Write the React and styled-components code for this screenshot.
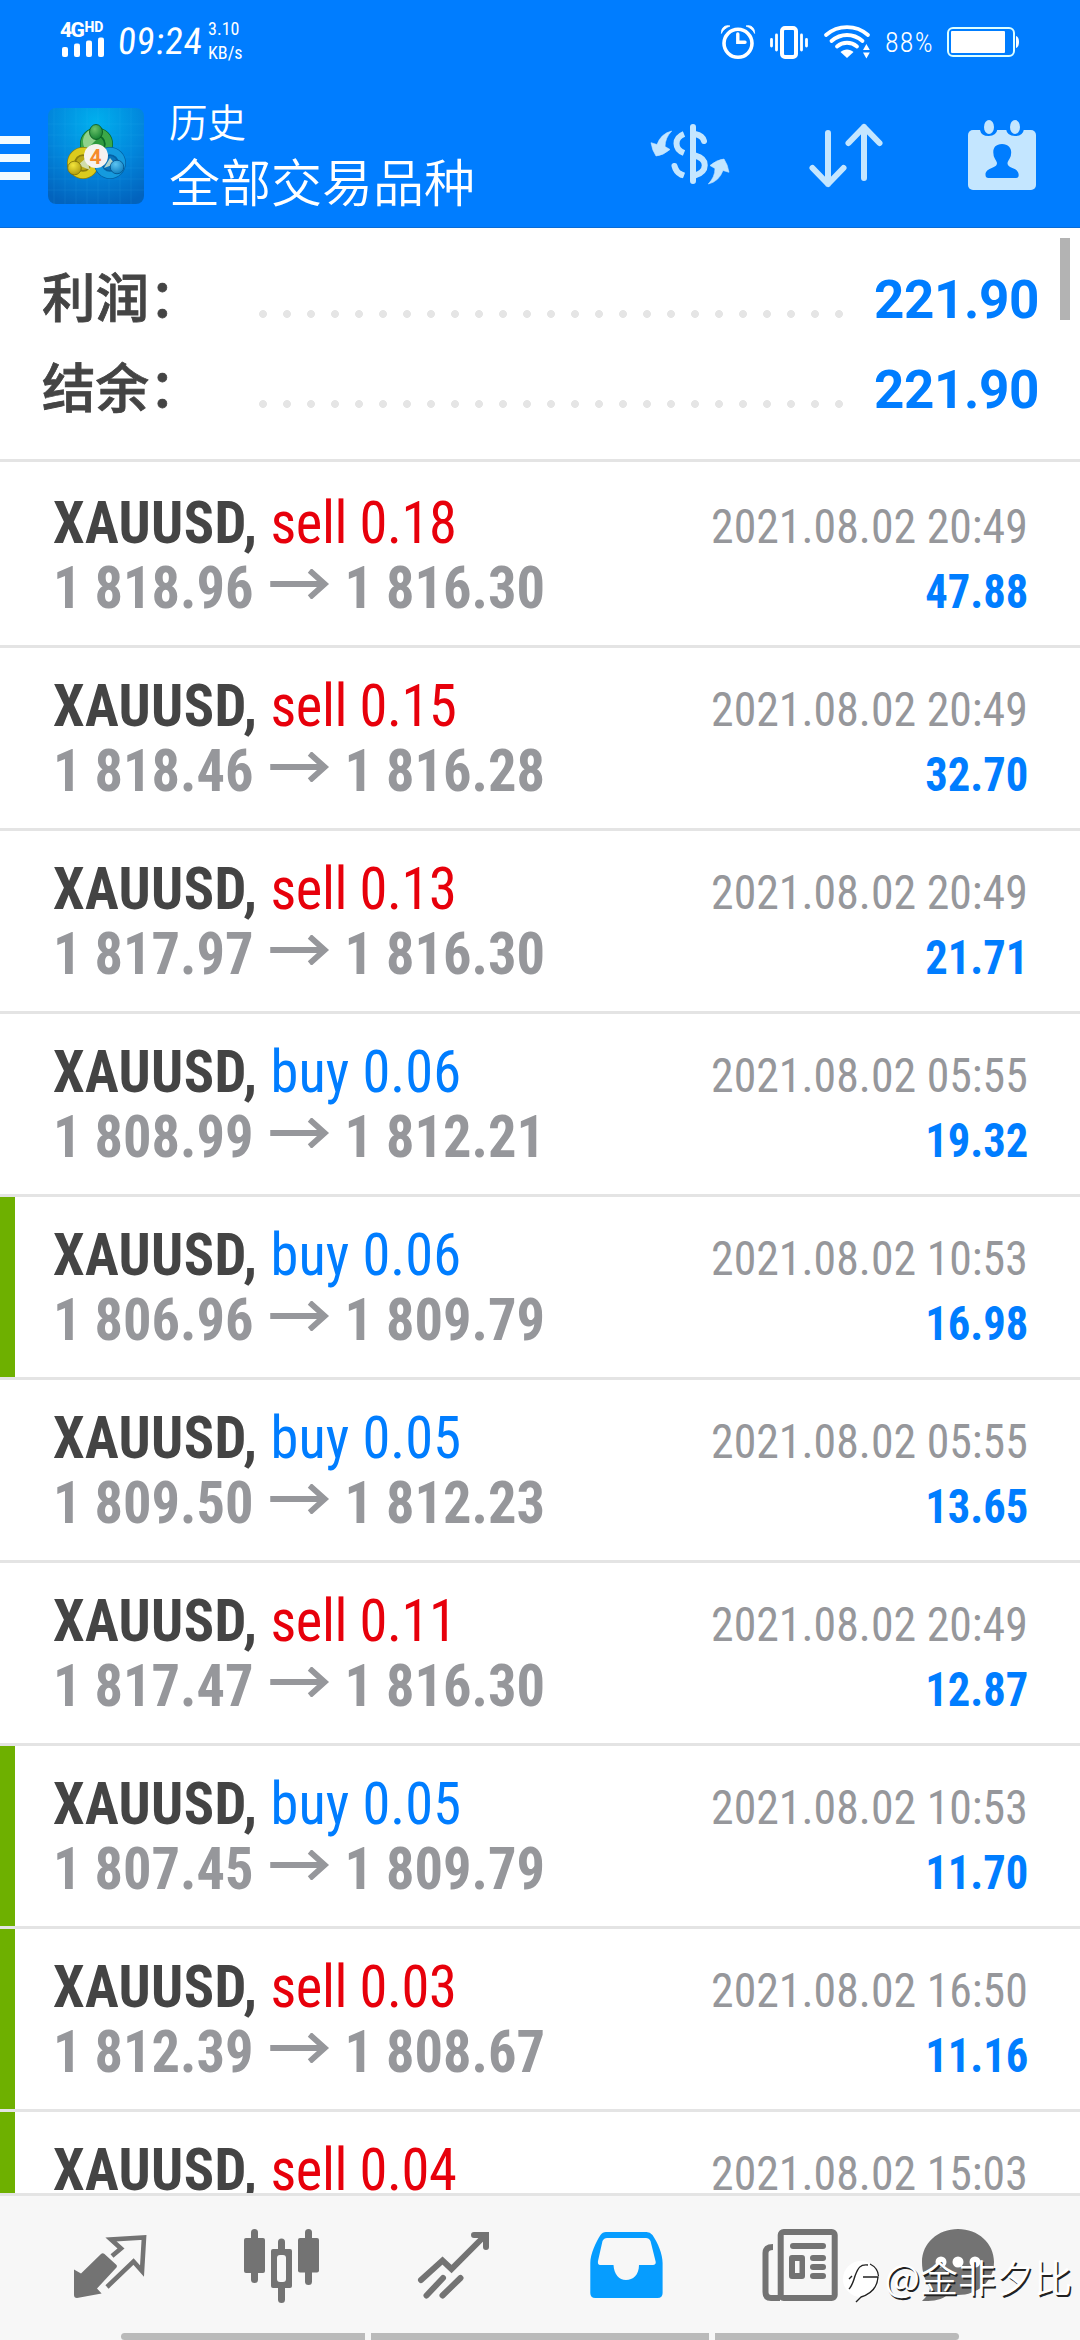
import React from 'react'
import styled, { createGlobalStyle } from 'styled-components'

const deals = [
  { type: 'sell', lot: '0.18', open: '1 818.96', close: '1 816.30', time: '2021.08.02 20:49', profit: '47.88' },
  { type: 'sell', lot: '0.15', open: '1 818.46', close: '1 816.28', time: '2021.08.02 20:49', profit: '32.70' },
  { type: 'sell', lot: '0.13', open: '1 817.97', close: '1 816.30', time: '2021.08.02 20:49', profit: '21.71' },
  { type: 'buy', lot: '0.06', open: '1 808.99', close: '1 812.21', time: '2021.08.02 05:55', profit: '19.32' },
  { type: 'buy', lot: '0.06', open: '1 806.96', close: '1 809.79', time: '2021.08.02 10:53', profit: '16.98', marked: true },
  { type: 'buy', lot: '0.05', open: '1 809.50', close: '1 812.23', time: '2021.08.02 05:55', profit: '13.65' },
  { type: 'sell', lot: '0.11', open: '1 817.47', close: '1 816.30', time: '2021.08.02 20:49', profit: '12.87' },
  { type: 'buy', lot: '0.05', open: '1 807.45', close: '1 809.79', time: '2021.08.02 10:53', profit: '11.70', marked: true },
  { type: 'sell', lot: '0.03', open: '1 812.39', close: '1 808.67', time: '2021.08.02 16:50', profit: '11.16', marked: true },
  { type: 'sell', lot: '0.04', time: '2021.08.02 15:03', marked: true },
]

const totals = [
  { label: '利润：', value: '221.90' },
  { label: '结余：', value: '221.90' },
]

const StatusBar = () => (
  <Status>
    <Signal>
      <Network>4G<sup>HD</sup></Network>
      <svg width='44' height='20' viewBox='61 37 44 20' fill='#fff'>
        <rect x='62' y='47' width='6' height='10' rx='2' />
        <rect x='74' y='43.5' width='6' height='13.5' rx='2' />
        <rect x='86' y='40.5' width='6' height='16.5' rx='2' />
        <rect x='98' y='37.5' width='6' height='19.5' rx='2' />
      </svg>
    </Signal>
    <Clock>09:24</Clock>
    <Speed>
      <span>3.10</span>
      <span>KB/s</span>
    </Speed>
    <StatusIcons>
      <svg width='154' height='84' viewBox='720 0 154 84' fill='none' stroke='#fff' strokeLinecap='round'>
        <circle cx='738' cy='43.3' r='14' strokeWidth='3.6' />
        <path d='M737.8 34V42.3H745' strokeWidth='3.4' />
        <path d='M721.5 33C721 28 725 24.5 730 26C726 27.5 723 30 721.5 33Z M754.5 33C755 28 751 24.5 746 26C750 27.5 753 30 754.5 33Z' fill='#fff' strokeWidth='.8' />
        <rect x='782' y='28' width='14' height='29' rx='3' strokeWidth='4' />
        <path d='M776.5 35V50M771.5 39.5V46M801.5 35V50M806.5 39.5V46' strokeWidth='2.8' />
        <path d='M826 35C838 24.5 856 24.5 868 35M831.5 41C841 33 853 33 862.5 41M837 46.5C843 41.5 851 41.5 857 46.5' strokeWidth='3.8' />
        <path d='M840.5 52C844 48.5 850 48.5 853.5 52L847 58Z' fill='#fff' stroke='none' />
        <path d='M863 50L866.4 44L869.8 50ZM863 52.5L866.4 58.5L869.8 52.5Z' fill='#fff' stroke='none' />
      </svg>
      <Percent>88%</Percent>
      <svg width='76' height='34' viewBox='945 25 76 34'>
        <rect x='948' y='28' width='66' height='28' rx='5' fill='none' stroke='#dff' strokeWidth='2' />
        <rect x='951' y='31' width='54' height='22' rx='1' fill='#fff' />
        <path d='M1016 36Q1019 37 1019 42T1016 48Z' fill='#fff' />
      </svg>
    </StatusIcons>
  </Status>
)

const Logo = () => (
  <svg width='96' height='96' viewBox='0 0 96 96'>
    <defs>
      <radialGradient id='tile' cx='.5' cy='.15' r='.9'>
        <stop offset='0' stopColor='#00b0ee' />
        <stop offset='.55' stopColor='#0286dc' />
        <stop offset='1' stopColor='#0263bd' />
      </radialGradient>
      <radialGradient id='green' cx='.4' cy='.3' r='.8'>
        <stop offset='0' stopColor='#6cc36a' />
        <stop offset='1' stopColor='#0b7a2c' />
      </radialGradient>
      <radialGradient id='yellow' cx='.4' cy='.3' r='.8'>
        <stop offset='0' stopColor='#f3e53c' />
        <stop offset='1' stopColor='#a89408' />
      </radialGradient>
      <radialGradient id='blue' cx='.4' cy='.3' r='.8'>
        <stop offset='0' stopColor='#5cc4f2' />
        <stop offset='1' stopColor='#0676ba' />
      </radialGradient>
    </defs>
    <rect width='96' height='96' rx='8' fill='url(#tile)' />
    <path d='M6 0V96M17 0V96M28 0V96M39 0V96M50 0V96M61 0V96M72 0V96M83 0V96M0 16H96M0 27H96M0 38H96M0 49H96M0 60H96M0 71H96M0 82H96' stroke='#4cc8ff' strokeWidth='.8' opacity='.13' />
    <circle cx='48.5' cy='36' r='12' fill='#2f9a3e' stroke='#0b6b2a' strokeWidth='9' />
    <circle cx='48.5' cy='36' r='12.5' fill='none' stroke='#3ba848' strokeWidth='6.5' />
    <path d='M42 22C34 26 33 36 38 42L48 32Z' fill='#8fd28c' />
    <circle cx='35' cy='55' r='11.5' fill='#b9a915' stroke='#8d7f0b' strokeWidth='9' />
    <circle cx='35' cy='55' r='12' fill='none' stroke='#dccb1d' strokeWidth='6.5' />
    <circle cx='62' cy='55' r='11.5' fill='#0a75bc' stroke='#0562a5' strokeWidth='9' />
    <circle cx='62' cy='55' r='12' fill='none' stroke='#159ade' strokeWidth='6.5' />
    <path d='M30 57L38 50L42 62ZM56 60L62 50L67 56Z' fill='#d7ead0' opacity='.8' />
    <ellipse cx='48' cy='24' rx='6.5' ry='7.5' fill='url(#green)' stroke='#07551e' strokeWidth='.8' />
    <circle cx='26.5' cy='60' r='6.8' fill='url(#yellow)' stroke='#7a6d07' strokeWidth='.8' />
    <circle cx='69' cy='59' r='6.8' fill='url(#blue)' stroke='#04508a' strokeWidth='.8' />
    <circle cx='48' cy='48' r='12' fill='#f6f3f0' />
    <text x='47.5' y='55.5' textAnchor='middle' fontFamily='Roboto' fontWeight='700' fontSize='21' fill='#f58a2c'>4</text>
  </svg>
)

const swapArrow = 'M671.7 131Q661 133.5 657 144.5L651 142.7Q652 150 656 156Q663 155.5 670 149.5L665 146.5Q665 138 671.7 131Z'

const Toolbar = () => (
  <Bar>
    <Burger><span /><span /><span /></Burger>
    <Logo />
    <Title>
      <small>历史</small>
      <span>全部交易品种</span>
    </Title>
    <Action viewBox='612 84 156 144'>
      <path d={swapArrow} fill='#c4e6ff' strokeWidth='.6' />
      <path d={swapArrow} fill='#c4e6ff' strokeWidth='.6' transform='rotate(180 690 157.5)' />
      <path d='M693 127V181M704 141C703 137 700 135 695 134M674.5 166C675.5 170 678 173 681 174.5' strokeLinecap='round' />
      <path d='M684 134C674 138 674 149 684 153M680 174L684 175.5M695 155.5C708 159 708 171 695 175.5' />
    </Action>
    <Action viewBox='768 84 156 144'>
      <path d='M828 133V184M812.5 168L828 184L843.5 168M864 178V127M848.5 143L864 127L879.5 143' strokeLinecap='round' strokeLinejoin='round' />
    </Action>
    <Action viewBox='924 84 156 144'>
      <rect x='968' y='130' width='68' height='60' rx='5' fill='#c4e6ff' stroke='none' />
      <path d='M980 129V130Q981 136 988.7 136T997.5 129ZM1006 129Q1007 136 1015 136T1024 129Z' fill='#007dff' stroke='none' />
      <ellipse cx='989' cy='127' rx='5' ry='7' fill='#c4e6ff' stroke='none' />
      <ellipse cx='1015' cy='127' rx='5' ry='7' fill='#c4e6ff' stroke='none' />
      <path d='M1002 144C1009 144 1012 149 1011 154C1011 158 1008 160 1007.5 163C1007 169 1018.7 167 1018.7 175Q1018.7 178 1016 178H988.5Q985.5 178 985.5 175C985.5 167 997 169 997 163C996.5 160 993.5 158 993.5 154C992.5 149 995 144 1002 144Z' fill='#007dff' stroke='none' />
    </Action>
  </Bar>
)

const Deal = ({ deal }) => (
  <Row $marked={deal.marked}>
    <Line>
      <Left><b>XAUUSD,</b> <Side $type={deal.type}>{deal.type} {deal.lot}</Side></Left>
      <Time>{deal.time}</Time>
    </Line>
    {deal.open && (
      <Line>
        <Prices>
          {deal.open}
          <Arrow viewBox='0 0 63 30'>
            <path d='M0 15H58M42 1.5L58 15L42 28.5' fill='none' stroke='currentColor' strokeWidth='6' />
          </Arrow>
          {deal.close}
        </Prices>
        <Profit>{deal.profit}</Profit>
      </Line>
    )}
  </Row>
)

const TabBar = () => (
  <Tabs>
    <Tab viewBox='24 2196 172 137'>
      <path d='M74 2269.5L81 2273.5L101 2254Q102.6 2252.5 104.5 2254L116.5 2265Q117.5 2266.5 116 2268L97 2288.5L101.6 2293.5L77 2298Q74 2298 74 2295Z' />
      <path d='M112 2256L121 2248.5L111 2239.5L144 2237.5L142 2271L133.5 2261.5L107 2287' fill='none' stroke='#737373' strokeWidth='4.6' />
    </Tab>
    <Tab viewBox='196 2196 172 137'>
      <rect x='244' y='2238' width='21' height='35' rx='2' />
      <rect x='251' y='2229' width='7' height='54' rx='3.5' />
      <rect x='298' y='2238' width='21' height='34.5' rx='2' />
      <rect x='305' y='2229' width='7' height='56' rx='3.5' />
      <rect x='278' y='2238.5' width='7' height='64.5' rx='3.5' />
      <rect x='271' y='2249' width='21' height='39' rx='2' />
      <rect x='277' y='2255' width='9' height='27' rx='3' fill='#f7f7f7' />
    </Tab>
    <Tab viewBox='368 2196 172 137'>
      <path d='M421 2280L442.5 2260.5L451.5 2269L485 2235.5M474 2235H486V2247M426.5 2295.5L443 2278M442.5 2295.5L460.5 2278' fill='none' stroke='#737373' strokeWidth='6' strokeLinecap='round' />
    </Tab>
    <Tab viewBox='540 2196 172 137' $active>
      <path fillRule='evenodd' d='M590.3 2293V2263C590.3 2254 596 2242 600.5 2235Q602.5 2232 606 2232H646.5Q650 2232 652.5 2235C658 2243 662.6 2254 662.6 2263V2293Q662.6 2298 657.6 2298H595.3Q590.3 2298 590.3 2293ZM607 2238Q604 2238 602.5 2241L598 2261Q597.5 2265 600 2265H613.5C614 2274 619 2280 626 2280S639 2275 639 2265H653Q656.5 2265 655.5 2261L650.5 2241Q649 2238 646 2238Z' />
    </Tab>
    <Tab viewBox='712 2196 172 137'>
      <path d='M773 2247Q765.5 2247 765.5 2253V2292Q765.5 2298 771 2298H780' fill='none' stroke='#737373' strokeWidth='6' />
      <rect x='780.7' y='2232' width='54' height='66' rx='3' fill='#f7f7f7' stroke='#737373' strokeWidth='6' />
      <rect x='790' y='2243' width='36' height='6' rx='3' />
      <path fillRule='evenodd' d='M792 2255H802Q805 2255 805 2258V2276Q805 2279 802 2279H792Q789 2279 789 2276V2258Q789 2255 792 2255ZM795 2261V2273H799.5V2261Z' />
      <rect x='810' y='2255' width='16' height='6' rx='3' />
      <rect x='810' y='2264' width='16' height='6' rx='3' />
      <rect x='810' y='2273' width='16' height='6' rx='3' />
    </Tab>
    <Tab viewBox='884 2196 172 137'>
      <path d='M958 2229C978 2229 994 2243 994 2262C994 2281 978 2295 958 2295C953 2295 950 2294.5 946 2296C939 2301 930 2301 922 2301C926 2297 929 2294 930 2288C925 2281 922 2272 922 2262C922 2243 938 2229 958 2229Z' />
      <circle cx='941' cy='2262' r='5.5' fill='#fff' />
      <circle cx='958' cy='2262' r='5.5' fill='#fff' />
      <circle cx='975' cy='2262' r='5.5' fill='#fff' />
    </Tab>
  </Tabs>
)

const App = () => {
  return (
    <Screen>
      <GlobalStyle />
      <StatusBar />
      <Toolbar />
      <Summary>
        {totals.map((t) => (
          <Total key={t.label}>
            <Label>{t.label}</Label>
            <Dots />
            <Sum>{t.value}</Sum>
          </Total>
        ))}
        <ScrollThumb />
      </Summary>
      <List>
        {deals.map((deal, i) => <Deal key={i} deal={deal} />)}
      </List>
      <TabBar />
      <HomeBars><i /><i /><i /></HomeBars>
      <Signature>
        <svg width='43' height='48' viewBox='841 2258 43 48'>
          <circle cx='861' cy='2279' r='18' fill='#fff' />
          <path d='M868 2265C860 2264 858 2268 855 2276C853 2283 851 2287 849 2289M849 2279L852 2276M863 2277H878Q877 2292 861 2297L856 2302' fill='none' stroke='#222' strokeWidth='1.4' />
          <path d='M870 2264Q878 2268 878.5 2276' fill='none' stroke='#222' strokeWidth='1.2' />
        </svg>
        @金非夕比
      </Signature>
    </Screen>
  )
}

const GlobalStyle = createGlobalStyle`
body{
  margin: 0;
  background: #fff;
}
*{
  box-sizing: border-box;
}
svg{
  display: block;
  flex: none;
}
`

const Screen = styled.div`
  position: relative;
  width: 1080px;
  height: 2340px;
  display: flex;
  flex-direction: column;
  overflow: hidden;
  background: #fff;
  font-family: Roboto, 'Noto Sans CJK SC', sans-serif;
`

const Status = styled.header`
  height: 84px;
  flex: none;
  display: flex;
  padding-left: 60px;
  background: #007dff;
  color: #fff;
  font-family: 'Roboto Condensed', Roboto, sans-serif;
`

const Signal = styled.div`
  width: 58px;
  padding-top: 20px;
  svg{
    margin: -3px 0 0 1px;
  }
`

const Network = styled.div`
  display: flex;
  font: 800 21px/20px Roboto, sans-serif;
  letter-spacing: -1.5px;
  sup{
    font-size: 14px;
    line-height: 15px;
    letter-spacing: 0;
    margin-left: 1px;
  }
`

const Clock = styled.div`
  width: 90px;
  font-size: 37px;
  line-height: 84px;
  font-weight: 400;
  letter-spacing: .6px;
  transform: skewX(-5deg);
`

const Speed = styled.div`
  display: flex;
  flex-direction: column;
  padding-top: 17px;
  font-size: 18px;
  line-height: 24px;
  font-weight: 400;
`

const StatusIcons = styled.div`
  margin-left: auto;
  padding-right: 59px;
  display: flex;
  align-items: center;
`

const Percent = styled.span`
  width: 71px;
  padding-left: 11px;
  font-size: 28px;
  font-weight: 350;
  letter-spacing: 1.2px;
`

const Bar = styled.div`
  height: 144px;
  flex: none;
  display: flex;
  align-items: center;
  background: #007dff;
  border-bottom: 1px solid #0a6cd6;
  color: #fff;
`

const Burger = styled.div`
  width: 48px;
  display: flex;
  flex-direction: column;
  gap: 10px;
  padding-top: 5px;
  span{
    width: 30px;
    height: 8px;
    background: #f2fbff;
  }
`

const Title = styled.div`
  flex: 1;
  display: flex;
  flex-direction: column;
  padding: 0 0 8px 25px;
  font-family: 'Noto Sans CJK SC', sans-serif;
  font-weight: 350;
  font-size: 51px;
  line-height: 62px;
  small{
    font-size: 38.5px;
    line-height: 57px;
  }
`

const Action = styled.svg`
  width: 156px;
  height: 144px;
  fill: none;
  stroke: #c4e6ff;
  stroke-width: 6px;
`

const Summary = styled.section`
  position: relative;
  height: 234px;
  flex: none;
  padding: 25px 43px 0 42px;
  border-bottom: 3px solid #e4e4e4;
`

const Total = styled.div`
  height: 90px;
  display: flex;
  align-items: flex-start;
  line-height: 90px;
`

const Label = styled.span`
  width: 216px;
  margin-top: -3px;
  font-family: 'Noto Sans CJK SC', sans-serif;
  font-size: 53.5px;
  font-weight: 500;
  color: #444;
  -webkit-text-stroke: .8px #444;
`

const Dots = styled.span`
  width: 600px;
  height: 8px;
  margin-top: 57px;
  background: radial-gradient(circle at 5px 4px, #e5e5e5 3.6px, transparent 4.2px) 0 0 / 24px 8px;
`

const Sum = styled.span`
  margin: 2px -2px 0 auto;
  font-size: 53px;
  font-weight: 700;
  letter-spacing: -.4px;
  color: #007dff;
`

const ScrollThumb = styled.div`
  position: absolute;
  top: 10px;
  right: 10px;
  width: 10px;
  height: 82px;
  background: #b3b3b3;
`

const List = styled.main`
  flex: 1;
  min-height: 0;
  overflow: hidden;
  padding-top: 3px;
  font-family: 'Roboto Condensed', Roboto, sans-serif;
`

const Row = styled.article`
  height: 183px;
  padding: 25px 52px 0 53px;
  border-bottom: 3px solid #e4e4e4;
  background: linear-gradient(${(p) => (p.$marked ? '#6eb000, #6eb000' : '#fff, #fff')}) no-repeat 0 0 / 15px 100%;
`

const Line = styled.div`
  height: 65px;
  display: flex;
  justify-content: space-between;
  align-items: baseline;
  line-height: 65px;
  white-space: pre;
`

/* the face is a little wide, so each text is narrowed toward its own edge */
const Left = styled.span`
  font-size: 60px;
  color: #444;
  transform: scaleX(.94);
  transform-origin: left;
  b{
    letter-spacing: .4px;
  }
`

const Side = styled.span`
  font-weight: 440;
  color: ${(p) => (p.$type === 'sell' ? '#e7000b' : '#007dff')};
  letter-spacing: ${(p) => (p.$type === 'sell' ? '-.4px' : '.1px')};
`

const Prices = styled(Left)`
  display: flex;
  align-items: baseline;
  font-weight: 700;
  color: #96979b;
`

const Arrow = styled.svg`
  width: 63px;
  height: 30px;
  margin: 0 16px 0 18px;
  transform: translateY(-9px);
`

const Time = styled.span`
  font-size: 49px;
  font-weight: 430;
  color: #96979b;
  transform: scaleX(.935);
  transform-origin: right;
`

const Profit = styled(Time)`
  font-weight: 700;
  color: #007dff;
  transform: scaleX(.91);
`

const Tabs = styled.nav`
  height: 140px;
  flex: none;
  display: flex;
  padding-left: 24px;
  border-top: 3px solid #e4e4e4;
  background: #f7f7f7;
`

const Tab = styled.svg`
  width: 172px;
  height: 137px;
  fill: ${(p) => (p.$active ? '#069dff' : '#737373')};
`

const HomeBars = styled.div`
  height: 7px;
  flex: none;
  display: flex;
  gap: 6px;
  padding: 0 121px;
  background: #f7f7f7;
  i{
    flex: 244;
    background: #bababa;
  }
  i:first-child{
    border-radius: 4px 0 0 4px;
  }
  i:nth-child(2){
    flex: 338;
  }
  i:last-child{
    border-radius: 0 4px 4px 0;
  }
`

/* author mark over the bottom bar */
const Signature = styled.div`
  position: absolute;
  right: 8px;
  bottom: 34px;
  display: flex;
  align-items: center;
  font-family: 'Noto Sans CJK SC', sans-serif;
  font-size: 38px;
  line-height: 48px;
  font-weight: 350;
  color: #fff;
  text-shadow: 1.5px 1.5px 0 #222;
  svg{
    margin-top: 12px;
  }
`

export default App
